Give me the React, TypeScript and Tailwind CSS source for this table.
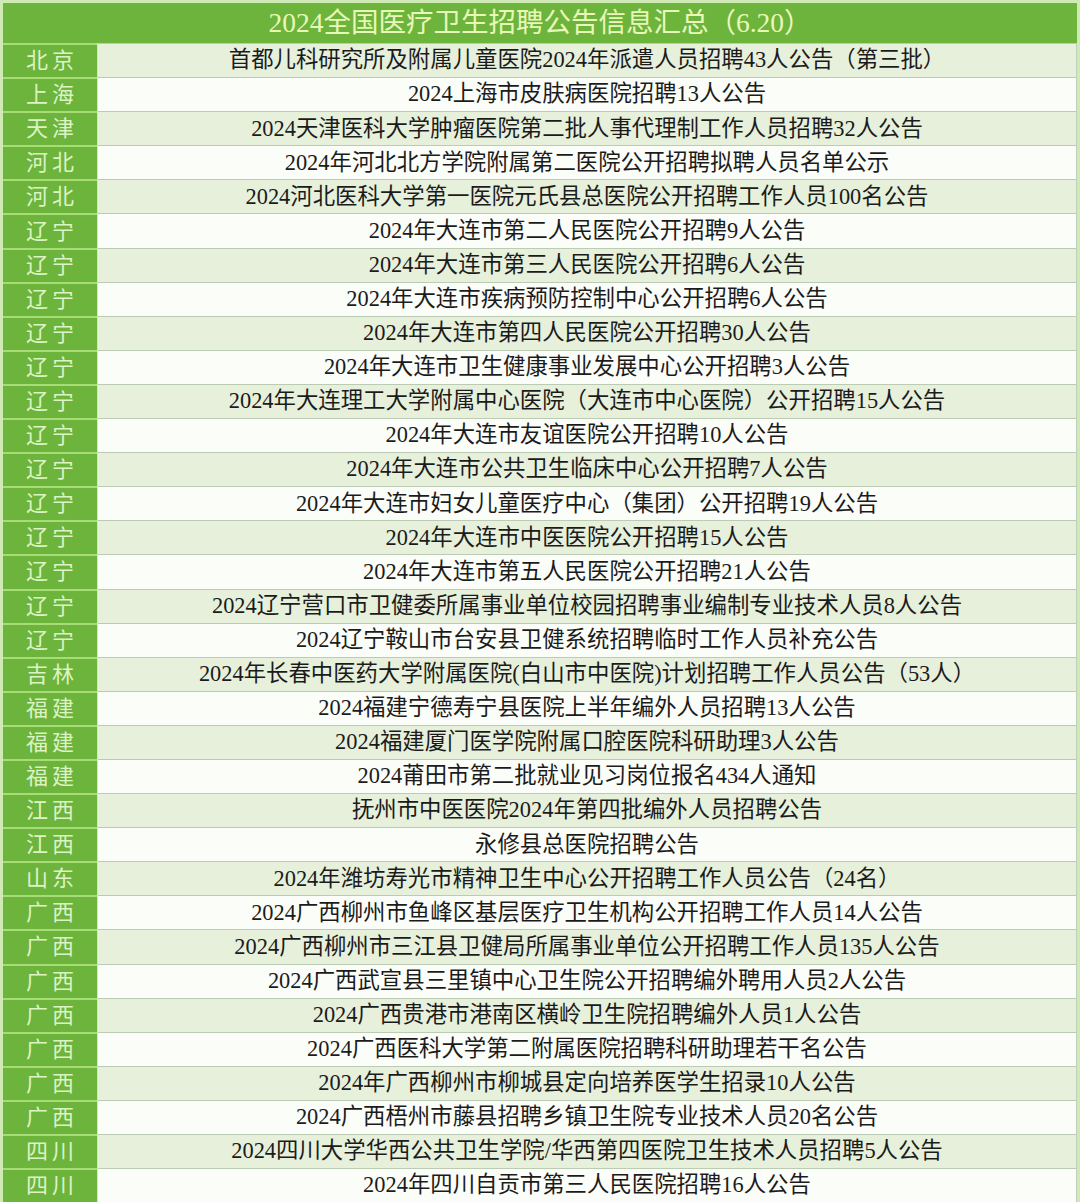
import React from "react";

const rows: [string, string][] = [
  ["北京", "首都儿科研究所及附属儿童医院2024年派遣人员招聘43人公告（第三批）"],
  ["上海", "2024上海市皮肤病医院招聘13人公告"],
  ["天津", "2024天津医科大学肿瘤医院第二批人事代理制工作人员招聘32人公告"],
  ["河北", "2024年河北北方学院附属第二医院公开招聘拟聘人员名单公示"],
  ["河北", "2024河北医科大学第一医院元氏县总医院公开招聘工作人员100名公告"],
  ["辽宁", "2024年大连市第二人民医院公开招聘9人公告"],
  ["辽宁", "2024年大连市第三人民医院公开招聘6人公告"],
  ["辽宁", "2024年大连市疾病预防控制中心公开招聘6人公告"],
  ["辽宁", "2024年大连市第四人民医院公开招聘30人公告"],
  ["辽宁", "2024年大连市卫生健康事业发展中心公开招聘3人公告"],
  ["辽宁", "2024年大连理工大学附属中心医院（大连市中心医院）公开招聘15人公告"],
  ["辽宁", "2024年大连市友谊医院公开招聘10人公告"],
  ["辽宁", "2024年大连市公共卫生临床中心公开招聘7人公告"],
  ["辽宁", "2024年大连市妇女儿童医疗中心（集团）公开招聘19人公告"],
  ["辽宁", "2024年大连市中医医院公开招聘15人公告"],
  ["辽宁", "2024年大连市第五人民医院公开招聘21人公告"],
  ["辽宁", "2024辽宁营口市卫健委所属事业单位校园招聘事业编制专业技术人员8人公告"],
  ["辽宁", "2024辽宁鞍山市台安县卫健系统招聘临时工作人员补充公告"],
  ["吉林", "2024年长春中医药大学附属医院(白山市中医院)计划招聘工作人员公告（53人）"],
  ["福建", "2024福建宁德寿宁县医院上半年编外人员招聘13人公告"],
  ["福建", "2024福建厦门医学院附属口腔医院科研助理3人公告"],
  ["福建", "2024莆田市第二批就业见习岗位报名434人通知"],
  ["江西", "抚州市中医医院2024年第四批编外人员招聘公告"],
  ["江西", "永修县总医院招聘公告"],
  ["山东", "2024年潍坊寿光市精神卫生中心公开招聘工作人员公告（24名）"],
  ["广西", "2024广西柳州市鱼峰区基层医疗卫生机构公开招聘工作人员14人公告"],
  ["广西", "2024广西柳州市三江县卫健局所属事业单位公开招聘工作人员135人公告"],
  ["广西", "2024广西武宣县三里镇中心卫生院公开招聘编外聘用人员2人公告"],
  ["广西", "2024广西贵港市港南区横岭卫生院招聘编外人员1人公告"],
  ["广西", "2024广西医科大学第二附属医院招聘科研助理若干名公告"],
  ["广西", "2024年广西柳州市柳城县定向培养医学生招录10人公告"],
  ["广西", "2024广西梧州市藤县招聘乡镇卫生院专业技术人员20名公告"],
  ["四川", "2024四川大学华西公共卫生学院/华西第四医院卫生技术人员招聘5人公告"],
  ["四川", "2024年四川自贡市第三人民医院招聘16人公告"],
];

export default function App() {
  return (
    <div
      className="w-[1080px] h-[1202px] bg-[#cfeab4] pt-[3px] pl-[3px] pr-[3px] overflow-hidden flex flex-col"
      style={{ fontFamily: '"Liberation Serif", "Noto Sans CJK SC", serif' }}
    >
      <div className="h-[40px] shrink-0 bg-[#6db43d] flex items-center justify-center text-[27.5px] text-[#e9f8b9] leading-none">
        2024全国医疗卫生招聘公告信息汇总（6.20）
      </div>
      <div className="flex-1 flex flex-col">
        {rows.map(([prov, title], i) => (
          <div key={i} className="flex-1 flex">
            <div className="w-[94px] shrink-0 bg-[#6db43d] border-t-2 border-[#a7dc77] flex items-center justify-center text-[22px] text-[#dcf3c4] tracking-[4px] pl-[4px] leading-none">
              {prov}
            </div>
            <div
              className={
                "flex-1 border-t border-[#bccbb4] ml-[1px] border-r border-r-[#c2cfbc] flex items-center justify-center text-[22.4px] text-[#1b1b1b] leading-none " +
                (i % 2 === 0 ? "bg-[#e6f0db]" : "bg-[#fbfdf9]")
              }
            >
              {title}
            </div>
          </div>
        ))}
      </div>
    </div>
  );
}
